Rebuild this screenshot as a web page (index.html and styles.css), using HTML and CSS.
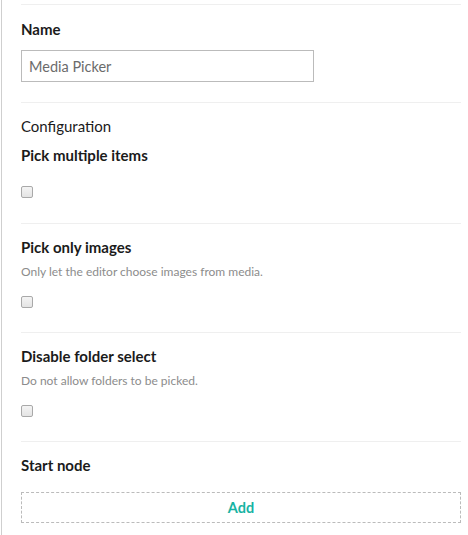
FILE: index.html
```html
<!DOCTYPE html>
<html>
<head>
<meta charset="utf-8">
<link rel="stylesheet" href="styles.css">
</head>
<body>
<div class="panel">
  <div class="section first">
    <div class="label">Name</div>
    <input class="text-input" type="text" value="Media Picker">
  </div>
  <div class="section">
    <div class="heading">Configuration</div>
    <div class="label">Pick multiple items</div>
    <div class="controls plain"><input class="check" type="checkbox"></div>
  </div>
  <div class="section">
    <div class="label">Pick only images</div>
    <div class="desc">Only let the editor choose images from media.</div>
    <div class="controls"><input class="check" type="checkbox"></div>
  </div>
  <div class="section">
    <div class="label">Disable folder select</div>
    <div class="desc">Do not allow folders to be picked.</div>
    <div class="controls"><input class="check" type="checkbox"></div>
  </div>
  <div class="section last">
    <div class="label">Start node</div>
    <div class="add-btn">Add</div>
  </div>
</div>
</body>
</html>
```
FILE: styles.css
```css
html, body {
  margin: 0;
  padding: 0;
  background: #fff;
}
body {
  font-family: Lato, "Open Sans", sans-serif;
  color: #1b1b1b;
  font-size: 15px;
}
.panel {
  margin-left: 1px;
  border-left: 1px solid #cfcfcf;
  min-height: 535px;
  box-sizing: border-box;
  padding: 4px 7px 0 19px;
}
.section {
  border-top: 1px solid #efefef;
  padding: 13px 0 24px 0;
  display: flex;
  flex-direction: column;
}
.section.first {
  padding-top: 14px;
  padding-bottom: 20px;
}
.label {
  font-weight: 700;
  font-size: 15px;
  line-height: 20px;
}
.heading {
  font-size: 15px;
  line-height: 20px;
  margin-bottom: 9px;
}
.desc {
  font-size: 12px;
  line-height: 20px;
  color: #8c8c8c;
  margin-top: 5px;
}
.text-input {
  margin: 11px 0 0 0;
  width: 293px;
  height: 32px;
  box-sizing: border-box;
  border: 1px solid #bbbbbb;
  border-radius: 0;
  padding: 0 7px;
  font-family: Lato, "Open Sans", sans-serif;
  font-size: 14.5px;
  color: #6b6b6b;
  outline: none;
}
.controls {
  margin-top: 14px;
  display: flex;
  height: 12px;
}
.controls.plain {
  margin-top: 21px;
  margin-bottom: 1px;
}
.check {
  appearance: none;
  -webkit-appearance: none;
  margin: 0;
  width: 12px;
  height: 12px;
  box-sizing: border-box;
  border: 1px solid #a9a9a9;
  border-radius: 2px;
  background: linear-gradient(#f4f4f4, #e4e4e4);
}
.add-btn {
  margin-top: 17px;
  height: 31px;
  box-sizing: border-box;
  border: 1px dashed #bbbbbb;
  display: flex;
  align-items: center;
  justify-content: center;
  color: #17b3a3;
  font-weight: 700;
  font-size: 14.5px;
}
```
